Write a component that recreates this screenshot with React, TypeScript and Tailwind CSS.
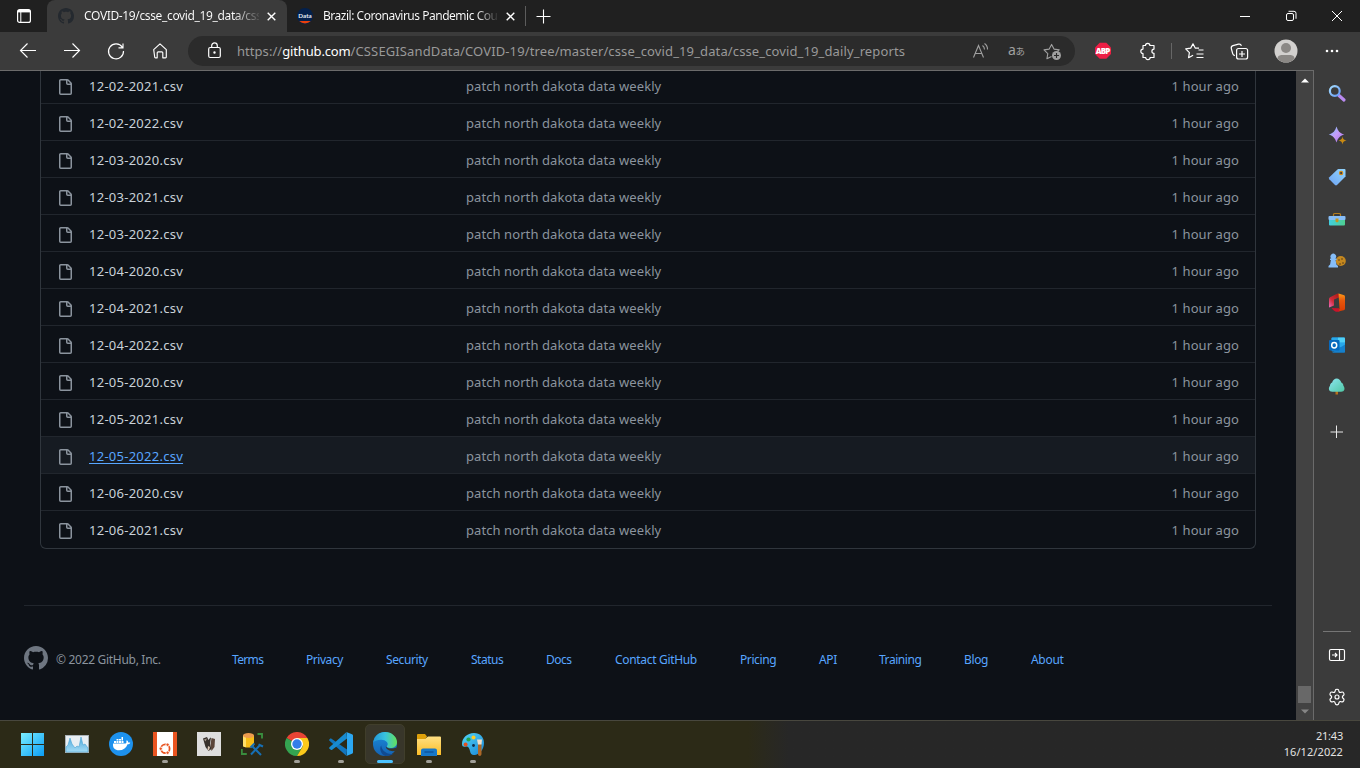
import React from "react";

const files = [
  "12-02-2021.csv", "12-02-2022.csv", "12-03-2020.csv", "12-03-2021.csv", "12-03-2022.csv",
  "12-04-2020.csv", "12-04-2021.csv", "12-04-2022.csv", "12-05-2020.csv", "12-05-2021.csv",
  "12-05-2022.csv", "12-06-2020.csv", "12-06-2021.csv",
];

const links = [
  { label: "Terms", cls: "w-[74px] tracking-[-0.65px]" },
  { label: "Privacy", cls: "w-[80px] tracking-[-0.45px]" },
  { label: "Security", cls: "w-[85px] tracking-[-0.4px]" },
  { label: "Status", cls: "w-[75px] tracking-[-0.5px]" },
  { label: "Docs", cls: "w-[69px] tracking-[-0.5px]" },
  { label: "Contact GitHub", cls: "w-[125px] tracking-[-0.32px]" },
  { label: "Pricing", cls: "w-[79px] tracking-[-0.4px]" },
  { label: "API", cls: "w-[60px] tracking-[-0.4px]" },
  { label: "Training", cls: "w-[85px] tracking-[-0.45px]" },
  { label: "Blog", cls: "w-[67px] tracking-[-0.35px]" },
  { label: "About", cls: "w-[60px] tracking-[-0.3px]" },
];

function GithubMark({ className }: { className: string }) {
  return (
    <svg viewBox="0 0 16 16" className={className} fill="currentColor">
      <path d="M8 0C3.58 0 0 3.58 0 8c0 3.54 2.29 6.53 5.47 7.59.4.07.55-.17.55-.38 0-.19-.01-.82-.01-1.49-2.01.37-2.53-.49-2.69-.94-.09-.23-.48-.94-.82-1.13-.28-.15-.68-.52-.01-.53.63-.01 1.08.58 1.23.82.72 1.21 1.87.87 2.33.66.07-.52.28-.87.51-1.07-1.78-.2-3.64-.89-3.64-3.95 0-.87.31-1.59.82-2.15-.08-.2-.36-1.02.08-2.12 0 0 .67-.21 2.2.82.64-.18 1.32-.27 2-.27.68 0 1.36.09 2 .27 1.53-1.04 2.2-.82 2.2-.82.44 1.1.16 1.92.08 2.12.51.56.82 1.27.82 2.15 0 3.07-1.87 3.75-3.65 3.95.29.25.54.73.54 1.48 0 1.07-.01 1.93-.01 2.2 0 .21.15.46.55.38A8.013 8.013 0 0016 8c0-4.42-3.58-8-8-8z" />
    </svg>
  );
}

function FileIcon() {
  return (
    <svg width="16" height="16" viewBox="0 0 16 16" fill="#8b949e">
      <path d="M2 1.75C2 .784 2.784 0 3.75 0h6.586c.464 0 .909.184 1.237.513l2.914 2.914c.329.328.513.773.513 1.237v9.586A1.75 1.75 0 0 1 13.25 16h-9.5A1.75 1.75 0 0 1 2 14.25Zm1.75-.25a.25.25 0 0 0-.25.25v12.5c0 .138.112.25.25.25h9.5a.25.25 0 0 0 .25-.25V6h-2.75A1.75 1.75 0 0 1 9 4.25V1.5Zm6.75.062V4.25c0 .138.112.25.25.25h2.688l-.011-.013-2.914-2.914-.013-.011Z" />
    </svg>
  );
}

function CloseX() {
  return (
    <svg width="9" height="9" viewBox="0 0 9 9" stroke="#fff" strokeWidth="1.4" className="shrink-0">
      <path d="M.7.7l7.6 7.6M8.3.7L.7 8.3" />
    </svg>
  );
}

function TabStrip() {
  return (
    <div className="flex h-8 shrink-0 bg-[#202020]">
      <div className="flex w-[47px] items-center pl-[17px]">
        <svg width="14" height="14" viewBox="0 0 14 14" fill="none" stroke="#fff">
          <rect x=".6" y=".6" width="12.8" height="12.8" rx="2" strokeWidth="1.2" />
          <path d="M1 2.2h12" strokeWidth="2.4" />
          <path d="M3.8 3v10" strokeWidth="1" />
        </svg>
      </div>
      <div className="flex w-[240px] items-center rounded-t-lg bg-[#3b3b3b] pl-[11px]">
        <GithubMark className="h-4 w-4 shrink-0 text-[#24292f]" />
        <div className="ml-[10px] w-[175px] overflow-hidden whitespace-nowrap bg-gradient-to-r from-white from-85% to-white/10 bg-clip-text text-[12px] tracking-[-0.36px] text-transparent">
          COVID-19/csse_covid_19_data/csse
        </div>
        <div className="ml-[8px] flex"><CloseX /></div>
      </div>
      <div className="flex w-[238px] items-center pl-[10px]">
        <svg width="16" height="16" viewBox="0 0 16 16" className="shrink-0">
          <circle cx="8" cy="8" r="8" fill="#03204c" />
          <path d="M2.2 13h11.6A8 8 0 0 1 2.200 13z" fill="#e8400c" />
          <text x="8" y="9.800" textAnchor="middle" fontSize="6.300" fontWeight="700" fill="#e8edf5" fontFamily="Lato, sans-serif">Data</text>
        </svg>
        <div className="ml-[10px] w-[174px] overflow-hidden whitespace-nowrap bg-gradient-to-r from-white from-88% to-white/10 bg-clip-text text-[12px] tracking-[-0.48px] text-transparent">
          Brazil: Coronavirus Pandemic Country
        </div>
        <div className="ml-[9px] flex"><CloseX /></div>
      </div>
      <div className="flex items-center">
        <div className="h-5 w-px bg-[#5c5c5c]" />
        <svg width="15" height="15" viewBox="0 0 15 15" stroke="#fff" className="ml-[10px]"><path d="M7.500 .5v14M.5 7.500h14" strokeWidth="1.100" /></svg>
      </div>
      <div className="ml-auto flex w-[120px] items-center">
        <svg width="104" height="12" viewBox="0 0 104 12" fill="none" stroke="#fff">
          <path d="M0 6.500h10" />
          <rect x="46.500" y="3.500" width="7" height="7" rx="1.500" />
          <path d="M48.500 1.300h5.500a2 2 0 0 1 2 2v5.500" />
          <path d="M92 1l10 10M102 1l-10 10" />
        </svg>
      </div>
    </div>
  );
}

function Toolbar() {
  return (
    <div className="flex h-[38px] shrink-0 items-center bg-[#3b3b3b]">
      <svg width="188" height="38" viewBox="0 0 188 38" fill="none" stroke="#fff" strokeWidth="1.150" className="shrink-0">
        <path d="M36 18.500H20.500M27.500 11.500l-7 7 7 7" />
        <path d="M64 18.500h15.500M72.500 11.500l7 7-7 7" />
        <path d="M122.300 15.300a7.500 7.500 0 1 0 1.200 3.700M123 11.500v4.300h-4.500" />
        <path d="M153.700 17.600l6.300-5.800 6.300 5.800V25a.8.8 0 0 1-.8.8h-2.700v-5a1 1 0 0 0-1-1h-3.600a1 1 0 0 0-1 1v5h-1.700a.8.8 0 0 1-.8-.8z" strokeLinejoin="round" />
      </svg>
      <div className="flex h-[30px] w-[887px] shrink-0 items-center rounded-full bg-[#2b2b2b] pl-[20px]">
        <svg width="13" height="17" viewBox="0 0 13 17" fill="none" stroke="#fff" strokeWidth="1.200" className="mb-[2px]">
          <rect x=".7" y="5.500" width="11.600" height="10" rx="1.500" />
          <path d="M3.700 5.500V3.700a2.800 2.800 0 0 1 5.600 0v1.800" />
          <circle cx="6.500" cy="10.500" r=".6" fill="#fff" />
        </svg>
        <div className="ml-[16px] w-[735px] whitespace-nowrap pt-[2px] text-[13px] text-[#999]">
          <span className="tracking-[0.05px]">https://</span>
          <span className="tracking-[-0.15px] text-white">github.com</span>
          <span className="tracking-[0.122px]">/CSSEGISandData/COVID-19/tree/master/csse_covid_19_data/csse_covid_19_daily_reports</span>
        </div>
        <svg width="92" height="20" viewBox="0 0 92 20" fill="none" stroke="#a0a0a0" strokeWidth="1.100">
          <path d="M1.500 16.500L6.500 4.500l5 12M3.200 12.500h6.600M10.500 4.500a5 5 0 0 1 2 4M12.500 2.500a7 7 0 0 1 3 6" />
          <text x="36" y="14" fontSize="14" fill="#a0a0a0" stroke="none" fontFamily="Noto Sans">a</text>
          <text x="43.500" y="13.500" fontSize="9.500" fill="#a0a0a0" stroke="none" fontFamily="Noto Sans CJK JP">あ</text>
          <path d="M79.500 15.400l-4.600 2.400.9-5.200-3.800-3.700 5.200-.8 2.400-4.700 2.400 4.700 5.200.8-1.700 1.600" strokeLinejoin="round" />
          <circle cx="84.500" cy="14.500" r="4.500" fill="#a0a0a0" stroke="none" />
          <path d="M82 14.500h5M84.500 12v5" stroke="#2b2b2b" />
        </svg>
      </div>
      <svg width="285" height="38" viewBox="0 0 285 38" fill="none" stroke="#fff" strokeWidth="1.200" className="shrink-0">
        <path d="M24.700 10.800h6.600l4.700 4.700v6.600l-4.700 4.700h-6.600L20 22.100v-6.600z" fill="#ed1e45" stroke="none" />
        <text x="28" y="21.900" textAnchor="middle" fontSize="8" fontWeight="800" fill="#fff" stroke="none" fontFamily="Open Sans" textLength="14.500">ABP</text>
        <path d="M68 13.500h2.500a2.200 2.200 0 0 1 4.400 0h4.100v3.600a2.100 2.100 0 0 0 0 4.200v4.200h-3.900a2.200 2.200 0 0 1-4.400 0H68v-4a2.200 2.200 0 0 1 0-4.400z" strokeLinejoin="round" />
        <path d="M96.500 11v16" stroke="#666" strokeWidth="1" />
        <path d="M124.500 16.600h-3.800l-2.200-4.300-2.300 4.300-5 .8 3.700 3.700-.8 5.100 4.500-2.400M124 18.500h5M122 22.500h7M122 26h7" transform="translate(-.5 -.5)" strokeLinejoin="round" />
        <rect x="161.600" y="16.500" width="11" height="10.500" rx="2" />
        <path d="M167 19v6M164 22h6M160 23.500a2.500 2.500 0 0 1-2.300-1.800l-1.400-5.200a2.400 2.400 0 0 1 1.700-2.800l5.500-1.500a2.400 2.400 0 0 1 2.900 1.700" />
        <circle cx="211" cy="19" r="11.500" fill="#d2d0ce" stroke="none" />
        <circle cx="211" cy="16" r="5" fill="#8b8885" stroke="none" />
        <path d="M202.500 26.700c0-3 2.500-3.700 4.500-3.700h8c2 0 4.500.7 4.500 3.700a11.500 11.500 0 0 1-17 0z" fill="#8b8885" stroke="none" />
        <g fill="#fff" stroke="none"><circle cx="252" cy="19" r="1.300" /><circle cx="257" cy="19" r="1.300" /><circle cx="262" cy="19" r="1.300" /></g>
      </svg>
    </div>
  );
}

function FileList() {
  return (
    <div className="mx-10 -mt-[5px] rounded-b-md border border-t-0 border-[#30363d] pb-px">
      {files.map((name) => {
        const hovered = name === "12-05-2022.csv";
        return (
          <div key={name} className={hovered ? "flex h-[37px] items-center border-t border-[#21262d] bg-[#161b22] pt-[3px] text-[13px]" : "flex h-[37px] items-center border-t border-[#21262d] pt-[3px] text-[13px]"}>
            <div className="ml-4"><FileIcon /></div>
            <div className={hovered ? "ml-4 w-[377px] tracking-[0.26px] text-[#58a6ff] underline underline-offset-2" : "ml-4 w-[377px] tracking-[0.26px] text-[#c9d1d9]"}>{name}</div>
            <div className="tracking-[0.08px] text-[#8b949e]">patch north dakota data weekly</div>
            <div className="ml-auto mr-4 tracking-[0.08px] text-[#8b949e]">1 hour ago</div>
          </div>
        );
      })}
    </div>
  );
}

function Footer() {
  return (
    <div className="mx-6 mt-14 flex border-t border-[#21262d] pt-10 text-[12px]">
      <GithubMark className="h-6 w-6 text-[#6e7681]" />
      <div className="ml-2 mt-[5px] w-[176px] tracking-[-0.3px] text-[#8b949e]">© 2022 GitHub, Inc.</div>
      <div className="mt-[5px] flex text-[#58a6ff]">
        {links.map((l) => <div key={l.label} className={l.cls}>{l.label}</div>)}
      </div>
    </div>
  );
}

function Sidebar() {
  return (
    <div className="flex w-[47px] shrink-0 flex-col justify-between border-l border-[#6b6b6b] bg-[#3b3b3b]">
      <svg width="46" height="380" viewBox="0 70 46 380" fill="none">
        <defs>
          <linearGradient id="lens" x1="0" y1="0" x2="1" y2="1"><stop stopColor="#a5ddff" /><stop offset="1" stopColor="#6398f5" /></linearGradient>
          <linearGradient id="spark" x1="0" y1="0" x2="1" y2="1"><stop stopColor="#6ec6ff" /><stop offset=".5" stopColor="#c79bf8" /><stop offset="1" stopColor="#a06be8" /></linearGradient>
          <linearGradient id="tag" x1="1" y1="0" x2="0" y2="1"><stop stopColor="#92d4fb" /><stop offset="1" stopColor="#6ea4f4" /></linearGradient>
          <linearGradient id="box" x1="0" y1="0" x2="1" y2="0"><stop stopColor="#42cfe0" /><stop offset="1" stopColor="#4fcf90" /></linearGradient>
          <linearGradient id="office" x1="0" y1="1" x2="1" y2="0"><stop stopColor="#ee70c0" /><stop offset=".4" stopColor="#d12b39" /><stop offset="1" stopColor="#a31a10" /></linearGradient>
          <linearGradient id="orange" x1="0" y1="0" x2="0" y2="1"><stop stopColor="#ff9b17" /><stop offset=".4" stopColor="#e5570c" /><stop offset="1" stopColor="#d83b01" /></linearGradient>
          <linearGradient id="tree" x1="0" y1="0" x2="1" y2="1"><stop stopColor="#8ee6f2" /><stop offset="1" stopColor="#4fc7a4" /></linearGradient>
        </defs>
        <path d="M25 95.500l5 4.500" stroke="#b98af0" strokeWidth="3.200" strokeLinecap="round" />
        <circle cx="20.800" cy="91" r="4.900" stroke="url(#lens)" strokeWidth="2.200" />
        <path d="M22.500 126.500c1.500 4.500 3 6.500 7.800 8-4.800 1.500-6.300 3.500-7.800 8-1.500-4.500-3-6.500-7.800-8 4.800-1.500 6.300-3.500 7.800-8z" fill="url(#spark)" />
        <path d="M28.500 136.500c.5 2.700 1.300 3.500 4 4-2.700.5-3.500 1.300-4 4-.5-2.700-1.300-3.500-4-4 2.700-.5 3.500-1.300 4-4z" fill="#c98a12" />
        <path d="M24 169h6.500a1 1 0 0 1 1 1v6.500L23 185a1.500 1.500 0 0 1-2 0l-5.700-5.700a1.500 1.500 0 0 1 0-2z" fill="url(#tag)" />
        <circle cx="27.100" cy="173" r="1.600" fill="#26364d" stroke="#d48b16" strokeWidth="1.200" />
        <path d="M19.500 216v-1.500a1 1 0 0 1 1-1h5a1 1 0 0 1 1 1v1.500" stroke="#b37d1d" strokeWidth="1.200" />
        <rect x="15" y="218" width="16" height="7.500" rx="1" fill="url(#box)" />
        <rect x="14.500" y="216" width="17" height="4" rx="1" fill="#87bef8" />
        <path d="M21.500 218.500h3v3l-1.500 1-1.500-1z" fill="#c39520" />
        <circle cx="26.800" cy="261" r="5" fill="#c5881e" />
        <g fill="#54391a"><circle cx="25" cy="260" r=".8" /><circle cx="28" cy="259" r=".8" /><circle cx="29" cy="263" r=".8" /><circle cx="26" cy="264" r=".8" /></g>
        <path d="M16 260v-1.500h1.300a2.800 2.800 0 1 1 4 0h1.300v1.500h-1l.8 4.500 1.600 1.500v1.500H14.500V266l1.600-1.500.8-4.500z" fill="#86bdf7" />
        <path d="M15 299.500c0-1.500.7-2 2-2.700l6.500-3.300 2.500.8-.5 3-5.500 2.200v6L15 307.500z" fill="url(#office)" />
        <path d="M24.500 293.500l5 1.500a1.700 1.700 0 0 1 1.500 1.700v12a1.700 1.700 0 0 1-1.300 1.600l-5.700 1.200 1.500-3z" fill="url(#orange)" />
        <path d="M17.500 308l7.500.3.500 3.200-2 .3c-1.700 0-2.700-.5-3.700-1.300z" fill="#c9142b" />
        <rect x="17.500" y="337.500" width="13.500" height="14" rx="1" fill="#1490df" />
        <path d="M17.500 338.500a1 1 0 0 1 1-1H24v5h-6.500zM24 342.500h7v4.500h-7z" fill="#28a8ea" />
        <path d="M24 337.500h6a1 1 0 0 1 1 1v4h-7z" fill="#50d0f7" />
        <path d="M31 344.500v7.500a.8.8 0 0 1-.8.800H18z" fill="#1580cc" />
        <rect x="15" y="340" width="10.500" height="10.500" rx="1" fill="#0869bd" />
        <ellipse cx="20.200" cy="345.200" rx="2.500" ry="2.700" stroke="#fff" strokeWidth="1.500" />
        <path d="M21.500 391h2.500v3.500h-2.500z" fill="#b8721b" />
        <path d="M22.700 378.500c2 0 4.200 1.800 4.500 4 1.600.7 2.200 1.900 2.200 3.300 2 2.500 1.300 6-2.300 6h-8.800c-3.600 0-4.300-3.500-2.300-6 0-1.400.6-2.600 2.200-3.300.3-2.200 2.500-4 4.500-4z" fill="url(#tree)" />
        <path d="M22.500 426v12.500M16.500 432.500H29" stroke="#e8e8e8" strokeWidth="1" transform="translate(0 -.5)" />
      </svg>
      <svg width="46" height="90" viewBox="0 630 46 90" fill="none" stroke="#fff" strokeWidth="1.150">
        <path d="M9 631.500h28" stroke="#757575" strokeWidth="1" />
        <rect x="15.500" y="649.500" width="15" height="11" rx="1.500" />
        <path d="M25.500 650v10M18 655h5M21 653l2 2-2 2" />
        <path d="M21.4 690.200c.2-1.300 3-1.300 3.200 0l.4 1.300c.2.800 1 1.200 1.800.9l1.300-.4c1.100-.3 2.500 2.100 1.700 3l-1 1c-.6.600-.6 1.400 0 2l1 1c.8.800-.6 3.200-1.700 2.900l-1.300-.3c-.8-.3-1.600.2-1.800 1l-.4 1.300c-.2 1.300-3 1.300-3.200 0l-.4-1.300c-.2-.8-1-1.300-1.800-1l-1.300.3c-1.100.3-2.500-2.100-1.700-2.900l1-1c.6-.6.6-1.400 0-2l-1-1c-.8-.9.6-3.300 1.700-3l1.300.4c.8.3 1.600-.1 1.800-.9z" />
        <circle cx="23" cy="697" r="2" />
      </svg>
    </div>
  );
}

function Slot({ children, mark }: { children: React.ReactNode; mark?: "run" | "active" }) {
  return (
    <div className="flex w-11 justify-center">
      <div className={mark === "active" ? "flex h-10 w-10 flex-col items-center rounded-[5px] border border-[#403e2b] bg-[#38362a] pt-[7px]" : "flex h-10 w-10 flex-col items-center pt-2"}>
        <svg width="24" height="24" viewBox="0 0 24 24" fill="none" className="shrink-0">{children}</svg>
        {mark === "run" && <div className="mt-1 h-[3px] w-[6px] rounded-full bg-[#a09f98]" />}
        {mark === "active" && <div className="mt-1 h-[3px] w-4 shrink-0 rounded-full bg-[#4cc2ff]" />}
      </div>
    </div>
  );
}

function Taskbar() {
  return (
    <div className="flex h-12 shrink-0 border-t border-[#48473e] bg-gradient-to-r from-[#2c2a17] from-55% to-[#272727] to-58%">
      <div className="flex pl-[11px] pt-[3px]">
        <Slot>
          <defs>
            <linearGradient id="win" x1="0" y1="0" x2="24" y2="24" gradientUnits="userSpaceOnUse"><stop stopColor="#7df0ff" /><stop offset="1" stopColor="#089bf5" /></linearGradient>
            <linearGradient id="chart" x1="0" y1="0" x2="0" y2="1"><stop stopColor="#4ba9dd" /><stop offset="1" stopColor="#a4dbf5" /></linearGradient>
            <linearGradient id="edge1" x1="0" y1="0" x2="1" y2="0"><stop stopColor="#2397d8" /><stop offset=".5" stopColor="#38c2df" /><stop offset="1" stopColor="#63e35b" /></linearGradient>
            <linearGradient id="edge2" x1="0" y1="0" x2="0" y2="1"><stop stopColor="#1b8ddb" /><stop offset="1" stopColor="#1462b4" /></linearGradient>
            <linearGradient id="folder" x1="0" y1="0" x2="0" y2="1"><stop stopColor="#ffe083" /><stop offset="1" stopColor="#fbbd27" /></linearGradient>
            <linearGradient id="paint" x1="0" y1="0" x2="1" y2="1"><stop stopColor="#53d4f6" /><stop offset="1" stopColor="#1988d8" /></linearGradient>
          </defs>
          <path d="M0 1h11v11H0zM12 1h11v11H12zM0 13h11v11H0zM12 13h11v11H12z" fill="url(#win)" />
        </Slot>
        <Slot>
          <rect x=".5" y="3.500" width="23" height="17" fill="#e8eef3" stroke="#a9b1b6" />
          <path d="M1 15l2-2 2-7 2 6 3 4 2-2 2 1 2-10 2 8 2-1 3 4v4H1z" fill="url(#chart)" stroke="#4ca4d5" strokeWidth=".6" />
        </Slot>
        <Slot>
          <circle cx="12" cy="12" r="12" fill="#1d91ed" />
          <path d="M4 11.500h12.500c.8 0 1.200-1.500.8-2.500l.6-.7c1 .6 1.300 1.500 1.300 2.200.7-.2 1.600 0 2.100.3-.5 1-1.500 1.500-2.700 1.500-1.700 4-4.500 6-8.600 6-4.200 0-6.400-2.300-6-6.800z" fill="#fff" />
          <path d="M5 9h2v2H5zM7.500 9h2v2h-2zM10 9h2v2h-2zM12.500 9h2v2h-2zM7.500 7h2v1.500h-2zM10 7h2v1.500h-2zM12.500 5h1.500v3.500h-1.500z" fill="#fff" />
        </Slot>
        <Slot mark="run">
          <path d="M0 0h24v24H0z" fill="#e95420" /><path d="M4 0h16v24H4z" fill="#fff" />
          <circle cx="12.300" cy="16.700" r="4.300" stroke="#e95420" strokeWidth="1.800" />
          <g fill="#e95420" stroke="#fff" strokeWidth=".9"><circle cx="7.700" cy="16.700" r="1.700" /><circle cx="14.600" cy="12.700" r="1.700" /><circle cx="14.600" cy="20.700" r="1.700" /></g>
        </Slot>
        <Slot>
          <path d="M0 0h24v24H0z" fill="#dedede" />
          <path d="M6 6.500l4-1.500 1.500 3L13 6l1-.5L13 12l1.500 5-3 2-3-4z" fill="#36302b" />
          <path d="M14.500 6l3.500 1-.5 8-3 4-1-6z" fill="#5b4539" /><path d="M7 7.500l3-1-1.500 3z" fill="#a6988b" /><path d="M11 14l2 1-1 3.500-1.500-.8z" fill="#dbc7b5" />
        </Slot>
        <Slot>
          <path d="M2 3.500v10c0 1.500 2.500 2 5.500 2s5.500-.5 5.500-2v-10z" fill="#f6bd18" /><path d="M2 3.500v10c0 1 1 1.600 3 1.800V4z" fill="#ffe069" />
          <ellipse cx="7.500" cy="3.500" rx="5.500" ry="2.500" fill="#ec9b4e" />
          <path d="M16.500 2H21v4.500M.800 17v5h5" stroke="#398c3d" strokeWidth="1.900" />
          <path d="M10 22.500l9.500-10M11 14l9 9M9.500 15.500l4-4M17.500 12.500l4.500 2" stroke="#166fb5" strokeWidth="2" />
        </Slot>
        <Slot mark="run">
          <path d="M12 12L1.600 6A12 12 0 0 1 22.400 6z" fill="#e84435" />
          <path d="M12 12L1.600 6A12 12 0 0 0 12 24l6-10z" fill="#34a350" />
          <path d="M12 6h10.400A12 12 0 0 1 12 24l6-10z" fill="#fbc91b" />
          <circle cx="12" cy="12" r="6" fill="#fff" /><circle cx="12" cy="12" r="4.700" fill="#337ee9" />
        </Slot>
        <Slot mark="run">
          <path d="M1.800 6.300L.5 7.300a1 1 0 0 0 0 1.500L17.500 24l.5-6.500z" fill="#1276be" />
          <path d="M1.800 17.700L.5 16.700a1 1 0 0 1 0-1.500L17.500 0l.5 6.500L3.200 17.700a1.100 1.100 0 0 1-1.400 0z" fill="#188bd0" />
          <path d="M17.300 0L23 2.300a1.300 1.300 0 0 1 1 1.300v16.800a1.300 1.300 0 0 1-1 1.300L17.300 24c.5-.3.700-.6.700-1.200V1.200c0-.6-.2-.9-.7-1.200z" fill="#2ca8f2" />
        </Slot>
        <Slot mark="active">
          <circle cx="12" cy="12" r="12" fill="url(#edge2)" />
          <path d="M.2 10.500C1.200 4 6 0 12 0c7 0 12 5 12 10 0 4-3 6-6.500 6-3 0-4-1.200-3.500-2 1.800-1.800.3-5.500-4.200-6C6 7.500 2 8.500.2 10.500z" fill="url(#edge1)" />
          <path d="M8.200 13.500c.2 4 4.500 8.500 9.800 8.500 1.500 0 2.800-.6 4-1.600-2.300 2.200-5.500 3.600-10 3.600C8 22 6 17 8.200 13.500z" fill="#114a91" />
          <path d="M23.800 15.500c-.3 1.200-.7 2.200-1.300 3.200-3.500 1.500-9.500-.7-9.700-4.200 1 2 6.500 3 11 1z" fill="#38362a" />
        </Slot>
        <Slot mark="run">
          <path d="M0 3a1 1 0 0 1 1-1h7l2 2.500-2 3H0z" fill="#dea00a" />
          <path d="M0 7h8l3-2.500h12a1 1 0 0 1 1 1V23H0z" fill="url(#folder)" />
          <path d="M4 24v-5.500A2 2 0 0 1 6 16.500h12a2 2 0 0 1 2 2V24z" fill="#1677c8" /><path d="M7.500 20h9" stroke="#0d4f97" strokeWidth="1.300" />
        </Slot>
        <Slot mark="run">
          <path d="M13 1C6 1 1 6 1 12c0 3 2 3 4 2.500S8.500 16 9 19s2 4.500 5 4c5-1 9-6 9-12S19 1 13 1z" fill="url(#paint)" />
          <circle cx="12.500" cy="5.500" r="2" fill="#ffcb26" /><circle cx="7.500" cy="7.500" r="2.100" fill="#22a64e" /><circle cx="4.600" cy="12.500" r="2" fill="#e35020" /><circle cx="12.500" cy="13.500" r="1.400" fill="#102c47" />
          <path d="M17 12h3.500v10c0 2.500-3.500 2.500-3.500 0z" fill="#ad6828" /><path d="M16 7.500h5l-.5 5H17z" fill="#f1dfca" />
        </Slot>
      </div>
      <div className="ml-auto mr-[17px] pt-[7px] text-right text-[11px] leading-4 text-[#e3e3e3]">
        <div className="tracking-[-0.2px]">21:43</div>
        <div className="tracking-[0.08px]">16/12/2022</div>
      </div>
    </div>
  );
}

export default function App() {
  return (
    <div className="flex h-[768px] w-[1360px] flex-col overflow-hidden bg-[#0d1117] font-['Noto_Sans','Open_Sans',sans-serif]">
      <TabStrip />
      <Toolbar />
      <div className="flex h-[650px] shrink-0">
        <div className="flex w-[1313px] border-t border-[#6b6b6b]">
          <div className="w-[1296px] overflow-hidden">
            <FileList />
            <Footer />
          </div>
          <div className="flex w-[17px] flex-col items-center justify-between bg-[#424242] pb-[6px] pt-[7px]">
            <svg width="8" height="5" viewBox="0 0 8 5"><path d="M0 4.500L4 .5l4 4z" fill="#fff" /></svg>
            <div className="flex flex-col items-center gap-[6px]">
              <div className="h-[17px] w-[13px] bg-[#686868]" />
              <svg width="8" height="5" viewBox="0 0 8 5"><path d="M0 .5l4 4 4-4z" fill="#868686" /></svg>
            </div>
          </div>
        </div>
        <Sidebar />
      </div>
      <Taskbar />
    </div>
  );
}
